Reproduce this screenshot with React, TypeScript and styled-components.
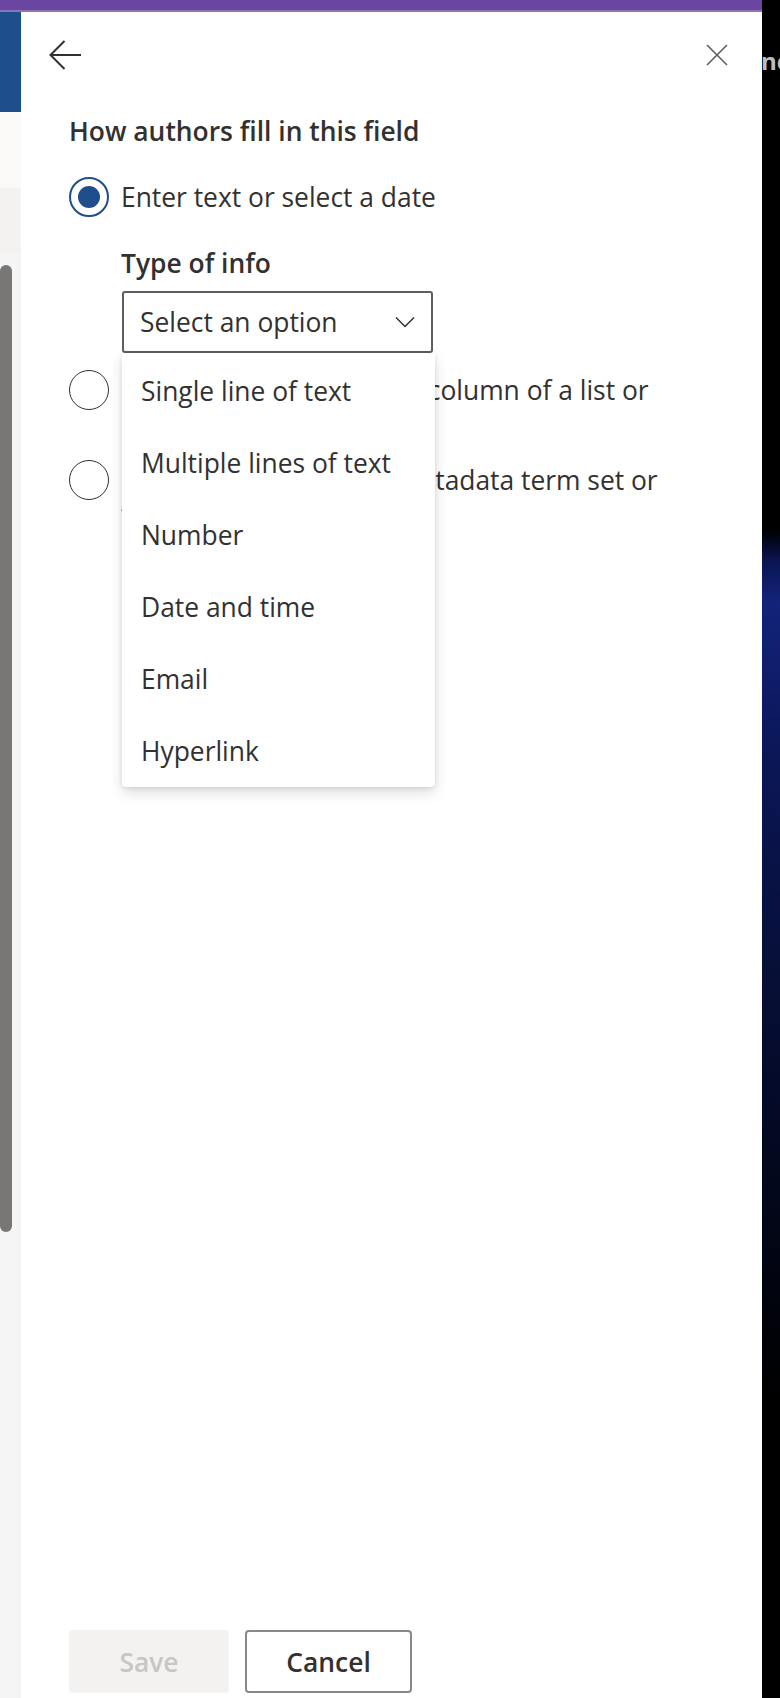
import React from "react";
import styled, { createGlobalStyle } from "styled-components";

const GlobalStyle = createGlobalStyle`
  html, body { margin: 0; padding: 0; background: #000; }
  body { font-family: "Open Sans", "Noto Sans", "Liberation Sans", sans-serif; }
  * { box-sizing: border-box; }
`;

const Page = styled.div`
  width: 780px;
  height: 1698px;
  display: grid;
  grid-template-columns: 762px 18px;
  overflow: hidden;
  background: #000;
`;

const Main = styled.div`
  display: flex;
  flex-direction: column;
  height: 1698px;
`;

const TopBar = styled.div`
  height: 12px;
  background: linear-gradient(#6a46a0 0, #6a46a0 10px, #8e73bd 10px, #8e73bd 12px);
  flex-shrink: 0;
`;

const Body = styled.div`
  flex: 1;
  display: flex;
  min-height: 0;
`;

const LeftStrip = styled.div`
  width: 21px;
  display: flex;
  flex-direction: column;
  flex-shrink: 0;
`;

const StripBlock = styled.div<{ $h: number; $bg: string }>`
  height: ${(p) => p.$h}px;
  background: ${(p) => p.$bg};
  flex-shrink: 0;
`;

const Track = styled.div`
  flex: 1;
  background: #f5f5f5;
  padding-top: 12px;
`;

const Thumb = styled.div`
  width: 12px;
  height: 967px;
  border-radius: 6px;
  background: #797775;
`;

const Panel = styled.div`
  flex: 1;
  background: #fff;
  display: flex;
  flex-direction: column;
  color: #323130;
`;

const Header = styled.div`
  height: 86px;
  display: flex;
  align-items: center;
  justify-content: space-between;
  padding: 0 27px 0 26px;
  flex-shrink: 0;
`;

const IconButton = styled.button`
  border: 0;
  background: transparent;
  padding: 0;
  width: 36px;
  height: 36px;
  display: flex;
  align-items: center;
  justify-content: center;
  cursor: pointer;
`;

const Content = styled.div`
  padding: 0 48px;
  display: flex;
  flex-direction: column;
`;

const Heading = styled.div`
  margin-top: 16px;
  font-size: 26.4px;
  line-height: 34px;
  font-weight: 600;
  white-space: nowrap;
`;

const OptionRow = styled.div<{ $mt: number }>`
  display: flex;
  align-items: flex-start;
  gap: 12px;
  margin-top: ${(p) => p.$mt}px;
`;

const RadioCircle = styled.div<{ $checked?: boolean }>`
  width: 40px;
  height: 40px;
  border-radius: 50%;
  border: ${(p) => (p.$checked ? "2px solid #1f4e8c" : "1.6px solid #323130")};
  flex-shrink: 0;
  display: flex;
  align-items: center;
  justify-content: center;
  &::after {
    content: "";
    display: ${(p) => (p.$checked ? "block" : "none")};
    width: 22px;
    height: 22px;
    border-radius: 50%;
    background: #1f4e8c;
  }
`;

const OptionText = styled.div`
  margin-top: 3px;
  font-size: 26.4px;
  line-height: 34px;
  color: #323130;
  width: 560px;
`;

const SubSection = styled.div`
  margin-left: 52px;
  display: flex;
  flex-direction: column;
`;

const SubLabel = styled.div`
  margin-top: 29px;
  font-size: 26.4px;
  line-height: 34px;
  font-weight: 600;
`;

const DropdownWrap = styled.div`
  position: relative;
  margin-top: 11px;
  margin-left: 1px;
  width: 311px;
`;

const DropdownBox = styled.div`
  height: 62px;
  border: 2px solid #605e5c;
  border-radius: 3px;
  display: flex;
  align-items: center;
  justify-content: space-between;
  padding: 0 16px 0 16px;
  font-size: 26.4px;
  color: #323130;
`;

const Menu = styled.div`
  position: absolute;
  top: 100%;
  left: 0;
  width: 313px;
  background: #fff;
  border-radius: 0 0 4px 4px;
  box-shadow: 0 6px 14px rgba(0, 0, 0, 0.13), 0 1px 4px rgba(0, 0, 0, 0.11);
  padding: 2px 0 0;
  z-index: 2;
`;

const MenuItem = styled.div`
  height: 72px;
  display: flex;
  align-items: center;
  padding-left: 19px;
  font-size: 26.4px;
  color: #323130;
`;

const Footer = styled.div`
  margin-top: auto;
  display: flex;
  gap: 16px;
  padding: 0 0 5px 48px;
`;

const Button = styled.button<{ $primary?: boolean }>`
  height: 63px;
  padding: 0 20px;
  min-width: ${(p) => (p.$primary ? 160 : 167)}px;
  border-radius: 4px;
  font-family: inherit;
  font-size: 26.4px;
  font-weight: 600;
  border: ${(p) => (p.$primary ? "2px solid #f3f2f1" : "2px solid #8a8886")};
  background: ${(p) => (p.$primary ? "#f3f2f1" : "#fff")};
  color: ${(p) => (p.$primary ? "#c8c6c4" : "#323130")};
`;

const Side = styled.div`
  height: 1698px;
  background: linear-gradient(
    #000 0,
    #000 530px,
    #0a1450 560px,
    #13237a 600px,
    #0b1656 760px,
    #07103a 950px,
    #030820 1150px,
    #000 1400px
  );
  overflow: hidden;
`;

const SideText = styled.div`
  padding-top: 44px;
  margin-left: -1px;
  font-size: 24px;
  font-weight: 700;
  color: #bdbdbd;
  white-space: nowrap;
  line-height: 34px;
`;

const menuItems = [
  "Single line of text",
  "Multiple lines of text",
  "Number",
  "Date and time",
  "Email",
  "Hyperlink",
];

export default function App() {
  return (
    <>
      <GlobalStyle />
      <Page>
        <Main>
          <TopBar />
          <Body>
            <LeftStrip>
              <StripBlock $h={100} $bg="#1f4e8c" />
              <StripBlock $h={76} $bg="#faf9f8" />
              <StripBlock $h={65} $bg="#f3f2f1" />
              <Track>
                <Thumb />
              </Track>
            </LeftStrip>
            <Panel>
              <Header>
                <IconButton aria-label="Back">
                  <svg width="34" height="32" viewBox="0 0 34 32" fill="none">
                    <path
                      d="M33 16H3M16.5 2L2.5 16L16.5 30"
                      stroke="#323130"
                      strokeWidth="2"
                    />
                  </svg>
                </IconButton>
                <IconButton aria-label="Close">
                  <svg width="22" height="22" viewBox="0 0 22 22" fill="none">
                    <path d="M1 1L21 21M21 1L1 21" stroke="#605e5c" strokeWidth="1.6" />
                  </svg>
                </IconButton>
              </Header>
              <Content>
                <Heading>How authors fill in this field</Heading>
                <OptionRow $mt={29}>
                  <RadioCircle $checked />
                  <OptionText>Enter text or select a date</OptionText>
                </OptionRow>
                <SubSection>
                  <SubLabel>Type of info</SubLabel>
                  <DropdownWrap>
                    <DropdownBox>
                      <span>Select an option</span>
                      <svg width="20" height="12" viewBox="0 0 20 12" fill="none">
                        <path d="M1 1.5L10 10.5L19 1.5" stroke="#323130" strokeWidth="1.5" />
                      </svg>
                    </DropdownBox>
                    <Menu>
                      {menuItems.map((m) => (
                        <MenuItem key={m}>{m}</MenuItem>
                      ))}
                    </Menu>
                  </DropdownWrap>
                </SubSection>
                <OptionRow $mt={17}>
                  <RadioCircle />
                  <OptionText>Choose a value from the column of a list or library</OptionText>
                </OptionRow>
                <OptionRow $mt={19}>
                  <RadioCircle />
                  <OptionText>Choose a term from a metadata term set or term</OptionText>
                </OptionRow>
              </Content>
              <Footer>
                <Button $primary>Save</Button>
                <Button>Cancel</Button>
              </Footer>
            </Panel>
          </Body>
        </Main>
        <Side>
          <SideText>nc</SideText>
        </Side>
      </Page>
    </>
  );
}
